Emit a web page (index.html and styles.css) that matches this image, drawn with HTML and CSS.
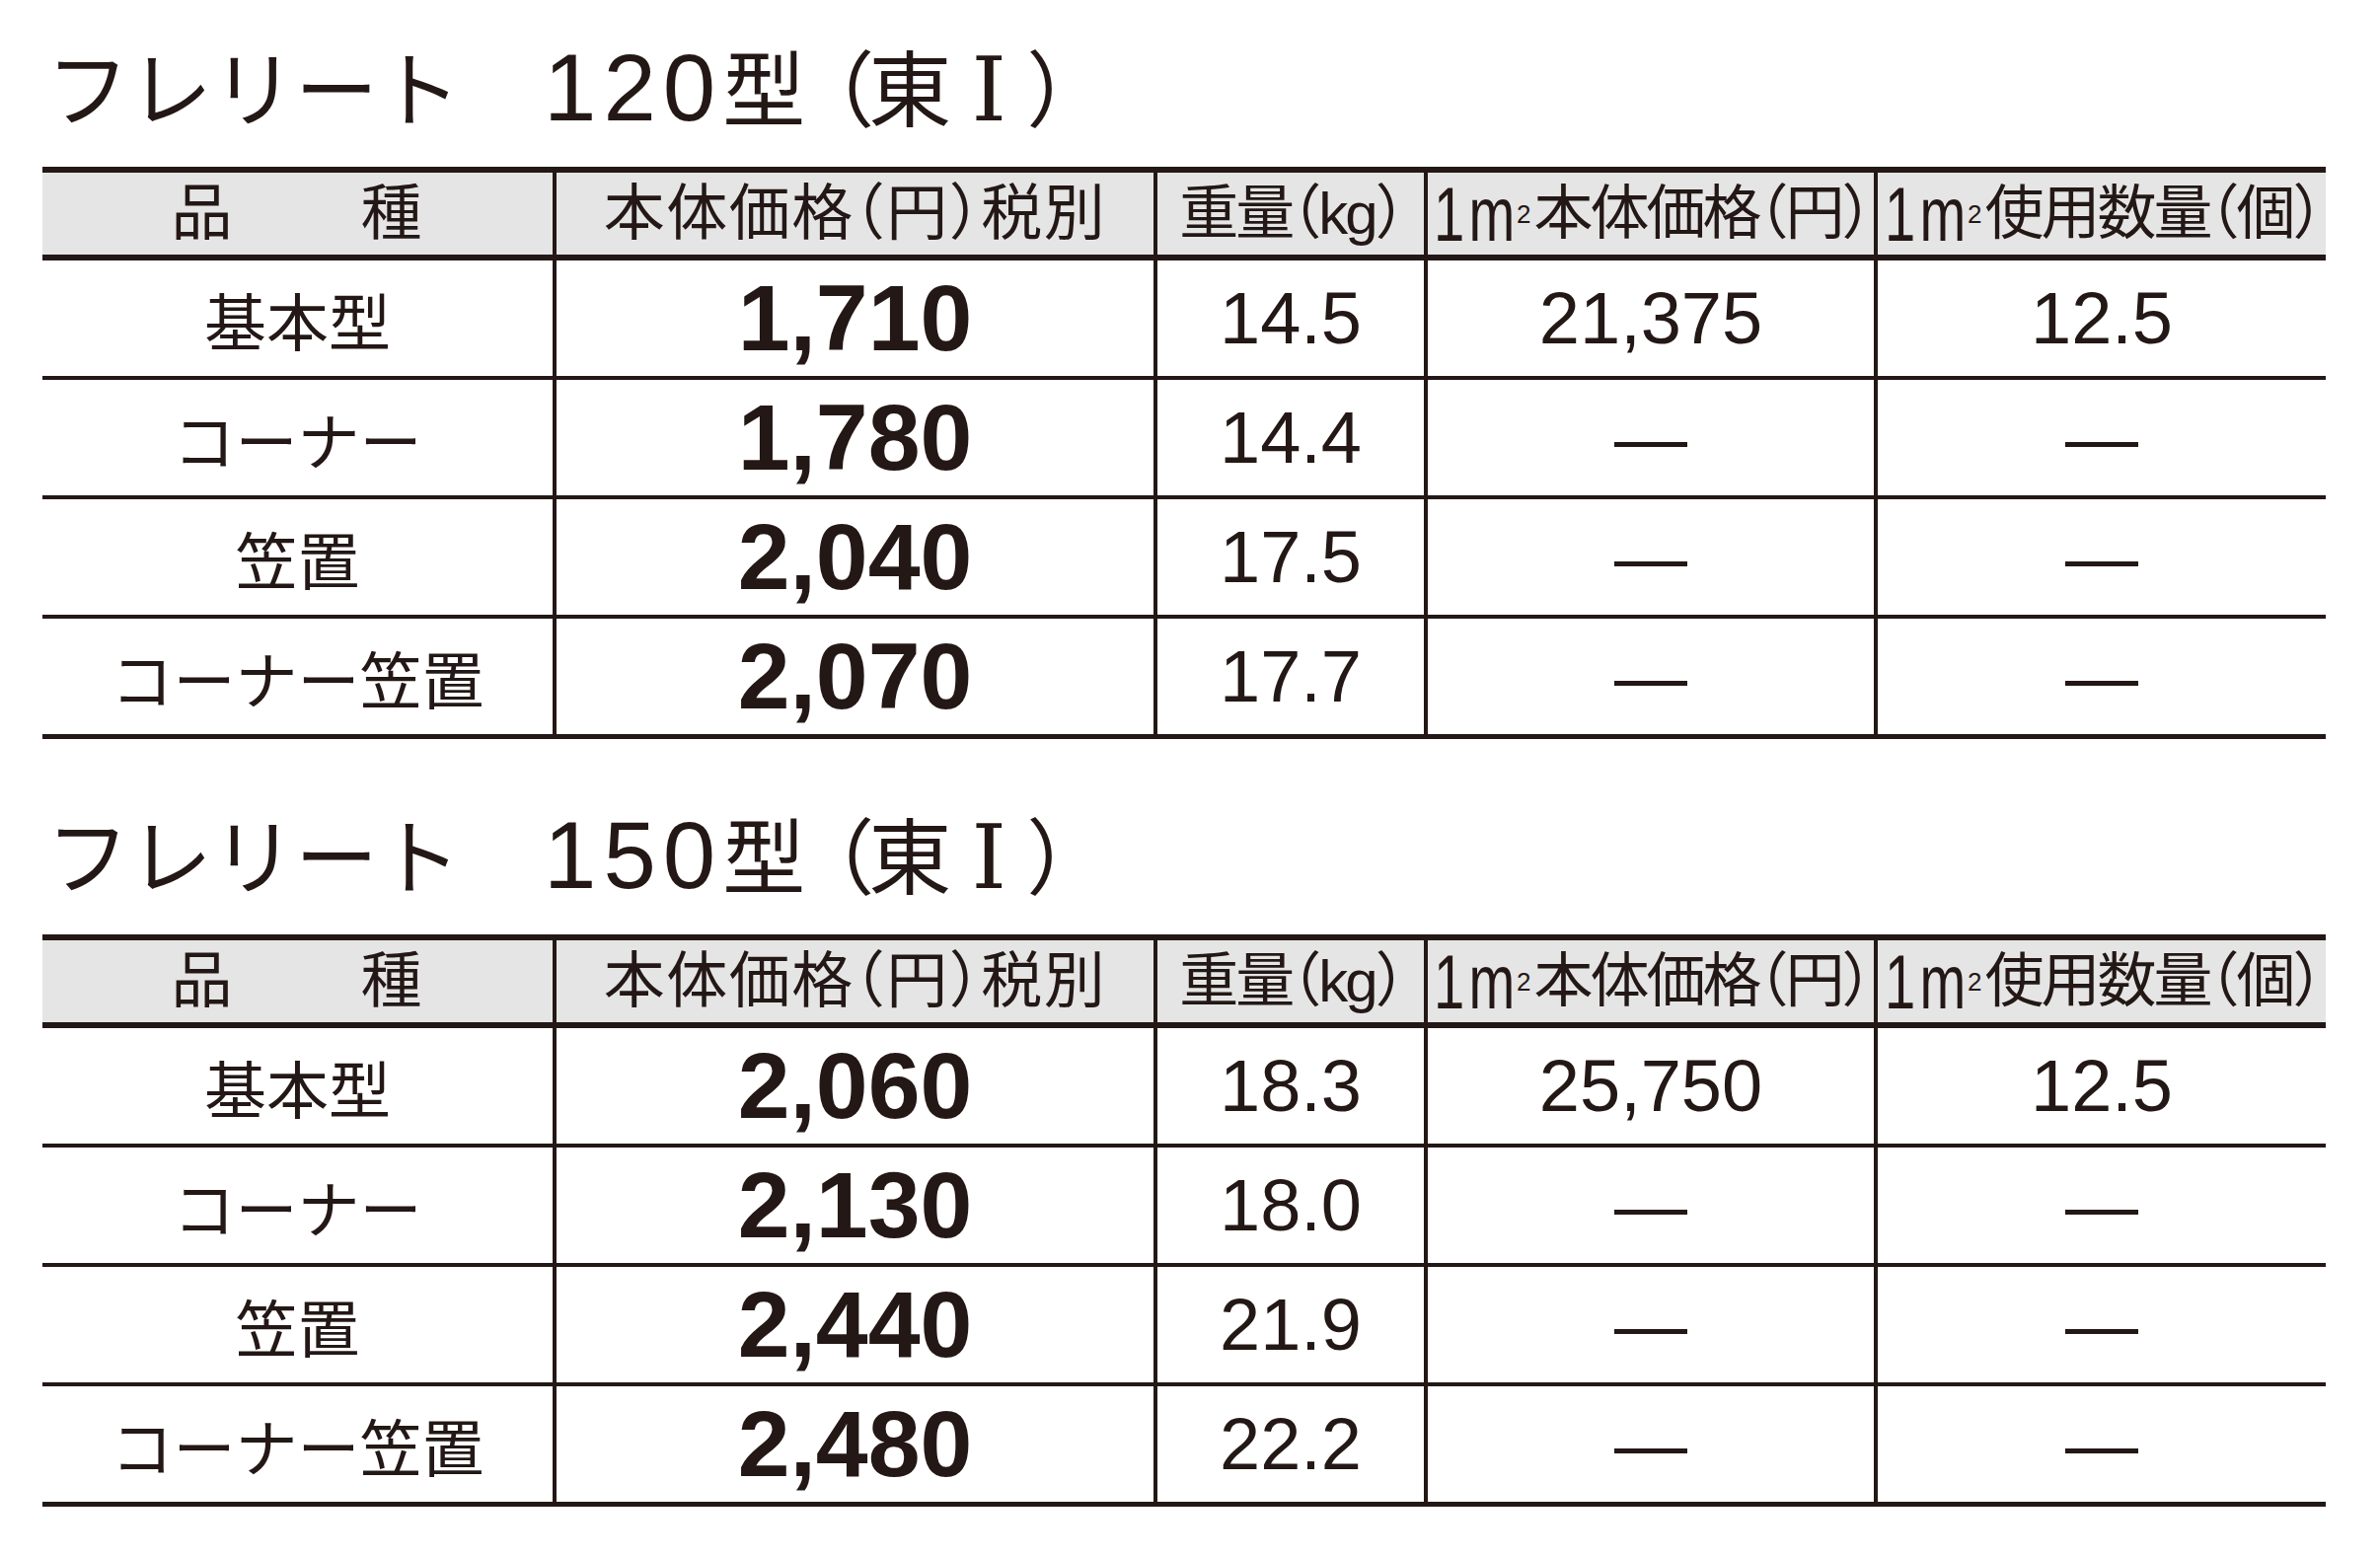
FILE: index.html
```html
<!DOCTYPE html>
<html lang="ja">
<head>
<meta charset="utf-8">
<title>フレリート 価格表</title>
<link rel="stylesheet" href="styles.css">
</head>
<body>
<div class="page">
  <section class="block">
    <h2 class="title">フレリート　<span class="tnum">120</span>型<span class="op">（</span>東<span class="roman">Ⅰ</span>）</h2>
    <div class="spec">
      <div class="row head">
        <div class="cell h1">品　　種</div>
        <div class="cell h2">本体価格（円）税別</div>
        <div class="cell h3">重量（kg）</div>
        <div class="cell h4"><span class="lat">1m</span><span class="sq">2</span>本体価格（円）</div>
        <div class="cell h4"><span class="lat">1m</span><span class="sq">2</span>使用数量（個）</div>
      </div>
      <div class="row">
        <div class="cell name">基本型</div>
        <div class="cell price">1,710</div>
        <div class="cell val">14.5</div>
        <div class="cell val">21,375</div>
        <div class="cell val">12.5</div>
      </div>
      <div class="row">
        <div class="cell name">コーナー</div>
        <div class="cell price">1,780</div>
        <div class="cell val">14.4</div>
        <div class="cell val">—</div>
        <div class="cell val">—</div>
      </div>
      <div class="row">
        <div class="cell name">笠置</div>
        <div class="cell price">2,040</div>
        <div class="cell val">17.5</div>
        <div class="cell val">—</div>
        <div class="cell val">—</div>
      </div>
      <div class="row last">
        <div class="cell name">コーナー笠置</div>
        <div class="cell price">2,070</div>
        <div class="cell val">17.7</div>
        <div class="cell val">—</div>
        <div class="cell val">—</div>
      </div>
    </div>
  </section>
  <section class="block">
    <h2 class="title">フレリート　<span class="tnum">150</span>型<span class="op">（</span>東<span class="roman">Ⅰ</span>）</h2>
    <div class="spec">
      <div class="row head">
        <div class="cell h1">品　　種</div>
        <div class="cell h2">本体価格（円）税別</div>
        <div class="cell h3">重量（kg）</div>
        <div class="cell h4"><span class="lat">1m</span><span class="sq">2</span>本体価格（円）</div>
        <div class="cell h4"><span class="lat">1m</span><span class="sq">2</span>使用数量（個）</div>
      </div>
      <div class="row">
        <div class="cell name">基本型</div>
        <div class="cell price">2,060</div>
        <div class="cell val">18.3</div>
        <div class="cell val">25,750</div>
        <div class="cell val">12.5</div>
      </div>
      <div class="row">
        <div class="cell name">コーナー</div>
        <div class="cell price">2,130</div>
        <div class="cell val">18.0</div>
        <div class="cell val">—</div>
        <div class="cell val">—</div>
      </div>
      <div class="row">
        <div class="cell name">笠置</div>
        <div class="cell price">2,440</div>
        <div class="cell val">21.9</div>
        <div class="cell val">—</div>
        <div class="cell val">—</div>
      </div>
      <div class="row last">
        <div class="cell name">コーナー笠置</div>
        <div class="cell price">2,480</div>
        <div class="cell val">22.2</div>
        <div class="cell val">—</div>
        <div class="cell val">—</div>
      </div>
    </div>
  </section>
</div>
</body>
</html>
```

FILE: styles.css
```css
* { box-sizing: border-box; }
html, body { margin: 0; padding: 0; background: #ffffff; }
body {
  color: #231815;
  font-family: "Noto Sans CJK JP", "Liberation Sans", sans-serif;
}
.page { padding-left: 43px; width: 2412px; }
.block + .block { margin-top: 29px; }

.title {
  margin: 0 0 0 4px;
  padding-top: 44px;
  height: 169px;
  font-size: 84px;
  line-height: 84px;
  font-weight: 400;
  white-space: nowrap;
}
.tnum {
  font-family: "Liberation Sans", sans-serif;
  font-size: 96px;
  letter-spacing: 7px;
}
.op {
  font-feature-settings: "halt";
  margin-left: 28px;
  letter-spacing: -6px;
}
.roman {
  display: inline-block;
  width: 76px;
  text-align: center;
  font-family: "DejaVu Serif", "Noto Sans CJK JP", serif;
  font-size: 90px;
}

.spec { width: 2314px; }
.row {
  display: grid;
  grid-template-columns: 517px 609px 274px 456px 458px;
  height: 121px;
  border-bottom: 4px solid #231815;
}
.row.head {
  height: 95px;
  border-top: 6px solid #231815;
  border-bottom: 6px solid #231815;
  background: #e5e5e5;
}
.row.last { height: 122px; border-bottom-width: 5px; }

.cell {
  display: flex;
  align-items: center;
  justify-content: center;
  white-space: nowrap;
  line-height: 1;
}
.cell + .cell { border-left: 4px solid #231815; }

.head .cell {
  font-family: "Liberation Sans", "Noto Sans CJK JP", sans-serif;
  font-size: 62px;
  font-feature-settings: "halt";
}
.head .h1 { letter-spacing: 2px; }
.head .h2 { letter-spacing: 1.5px; }
.head .h3 { font-size: 60px; letter-spacing: -3px; }
.head .h4 { font-size: 60px; letter-spacing: -3px; }
.lat {
  display: inline-block;
  font-size: 78px;
  line-height: 40px;
  letter-spacing: 6px;
  transform: scaleX(0.72);
  transform-origin: 0 50%;
  margin-right: -36px;
}
.sq {
  font-size: 26px;
  line-height: 0;
  letter-spacing: 0;
  vertical-align: 46px;
  margin-right: 3px;
}

.name {
  font-family: "Noto Sans CJK JP", sans-serif;
  font-size: 63px;
}
.price {
  font-family: "Liberation Sans", sans-serif;
  font-weight: 700;
  font-size: 95px;
}
.val {
  font-family: "Liberation Sans", sans-serif;
  font-size: 74px;
}
```
